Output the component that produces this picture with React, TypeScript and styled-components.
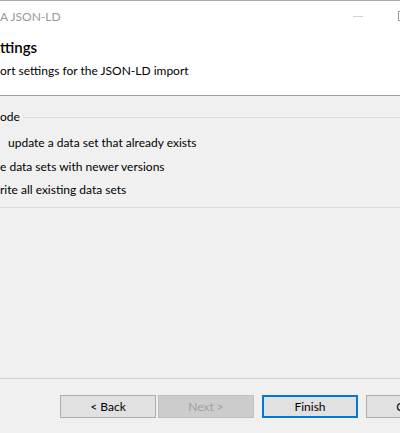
import styled, { createGlobalStyle } from "styled-components";

const GlobalStyle = createGlobalStyle`
  html, body {
    margin: 0;
    padding: 0;
    background: #f0f0f0;
  }
  body {
    width: 400px;
    height: 433px;
    overflow: hidden;
    font-family: "Lato", "Noto Sans", sans-serif;
    font-size: 12px;
    color: #000;
  }
`;

const Window = styled.div`
  display: flex;
  flex-direction: column;
  width: 400px;
  height: 433px;
  box-sizing: border-box;
  border-top: 1px solid #aaaaaa;
  background: #f0f0f0;
`;

const TitleBar = styled.div`
  display: flex;
  align-items: center;
  height: 30px;
  background: #fff;
`;

const Title = styled.span`
  flex: 1;
  color: #999999;
  font-size: 12px;
`;

const Controls = styled.div`
  display: flex;
  align-items: center;
  gap: 35px;
  margin-right: -8px;
`;

const MinIcon = styled.span`
  width: 10px;
  height: 1px;
  background: #d0d0d0;
`;

const MaxIcon = styled.span`
  width: 8px;
  height: 8px;
  border: 1px solid #999;
`;

const Header = styled.div`
  display: flex;
  flex-direction: column;
  height: 65px;
  padding-top: 6px;
  box-sizing: border-box;
  background: #fff;
  border-bottom: 1px solid #a0a0a0;
`;

const PageTitle = styled.div`
  font-size: 15px;
  font-weight: 600;
  line-height: 20px;
`;

const PageDesc = styled.div`
  margin-top: 6px;
  line-height: 16px;
`;

const Body = styled.div`
  flex: 1;
  padding-top: 13px;
`;

const Group = styled.div`
  border-bottom: 1px solid #dcdcdc;
  padding-bottom: 9px;
`;

const GroupHead = styled.div`
  display: flex;
  align-items: center;
  gap: 3px;
  line-height: 16px;
`;

const GroupLine = styled.span`
  flex: 1;
  height: 1px;
  background: #dcdcdc;
`;

const Options = styled.div`
  display: flex;
  flex-direction: column;
  gap: 7.5px;
  margin-top: 10px;
`;

const Option = styled.div<{ $indent?: number }>`
  line-height: 16px;
  padding-left: ${(p) => p.$indent ?? 0}px;
`;

const Footer = styled.div`
  display: flex;
  gap: 8px;
  padding: 16px 0 15px 60px;
  border-top: 1px solid #d0d0d0;
`;

const BackNext = styled.div`
  display: flex;
  gap: 2px;
`;

const Button = styled.button<{ $primary?: boolean }>`
  width: 96px;
  height: 23px;
  box-sizing: border-box;
  padding: 0;
  font-family: inherit;
  font-size: 12px;
  color: #000;
  background: #e1e1e1;
  border: 1px solid #adadad;
  flex-shrink: 0;

  ${(p) => p.$primary && `border: 2px solid #0078d7;`}

  &:disabled {
    background: #cccccc;
    border-color: #bfbfbf;
    color: #a0a0a0;
  }
`;

export default function App() {
  return (
    <>
      <GlobalStyle />
      <Window>
        <TitleBar>
          <Title>A JSON-LD</Title>
          <Controls>
            <MinIcon />
            <MaxIcon />
          </Controls>
        </TitleBar>
        <Header>
          <PageTitle>ttings</PageTitle>
          <PageDesc>ort settings for the JSON-LD import</PageDesc>
        </Header>
        <Body>
          <Group>
            <GroupHead>
              <span>ode</span>
              <GroupLine />
            </GroupHead>
            <Options>
              <Option $indent={8}>update a data set that already exists</Option>
              <Option>e data sets with newer versions</Option>
              <Option>rite all existing data sets</Option>
            </Options>
          </Group>
        </Body>
        <Footer>
          <BackNext>
            <Button>&lt; Back</Button>
            <Button disabled>Next &gt;</Button>
          </BackNext>
          <Button $primary>Finish</Button>
          <Button>Cancel</Button>
        </Footer>
      </Window>
    </>
  );
}
